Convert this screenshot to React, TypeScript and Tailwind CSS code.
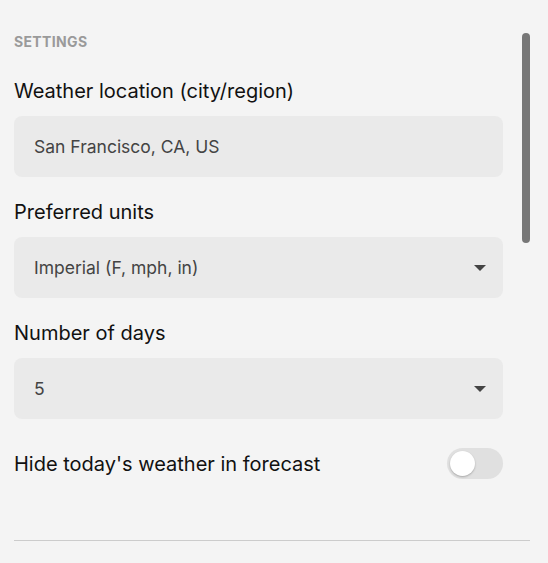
import { useState } from "react";

function Caret() {
  return (
    <svg width="14" height="8" viewBox="0 0 14 8" className="shrink-0">
      <path d="M1 1h12L7 7z" fill="#444" />
    </svg>
  );
}

function Field({ label, children }: { label: string; children: React.ReactNode }) {
  return (
    <div className="mb-[23px]">
      <div className="h-6 leading-[25px] text-[20px] text-[#111] mb-[13px]">{label}</div>
      {children}
    </div>
  );
}

function SelectBox({ value }: { value: string }) {
  return (
    <div className="h-[61px] rounded-lg bg-[#eaeaea] flex items-center justify-between pl-5 pr-4">
      <span className="text-[17.5px] leading-6 pt-px text-[#444]">{value}</span>
      <Caret />
    </div>
  );
}

export default function App() {
  const [hideToday, setHideToday] = useState(false);

  return (
    <div
      className="relative w-[548px] h-[563px] bg-[#f4f4f4] overflow-hidden"
      style={{ fontFamily: "Inter, 'Noto Sans', sans-serif" }}
    >
      {/* scrollbar thumb */}
      <div className="absolute left-[522px] top-[33px] w-2 h-[210px] rounded-full bg-[#777]" />

      <div className="pl-[14px] pr-[18px] pt-[34px]">
        <div className="w-[489px]">
          <div className="h-4 leading-4 text-[14px] font-bold tracking-wide text-[#9a9a9a] mb-[29px]">
            SETTINGS
          </div>

          <Field label="Weather location (city/region)">
            <div className="h-[61px] rounded-lg bg-[#eaeaea] flex items-center pl-5">
              <span className="text-[17.5px] leading-6 pt-px text-[#444]">San Francisco, CA, US</span>
            </div>
          </Field>

          <Field label="Preferred units">
            <SelectBox value="Imperial (F, mph, in)" />
          </Field>

          <Field label="Number of days">
            <SelectBox value="5" />
          </Field>

          <div className="flex items-center justify-between mt-[29px] h-[31px]">
            <span className="text-[20px] leading-6 pt-px text-[#111]">Hide today's weather in forecast</span>
            <button
              onClick={() => setHideToday(!hideToday)}
              className={`w-14 h-[31px] rounded-full p-[3px] flex ${
                hideToday ? "bg-[#4a90e2] justify-end" : "bg-[#e0e0e0] justify-start"
              }`}
            >
              <span className="w-[25px] h-[25px] rounded-full bg-white shadow-[0_1px_2px_rgba(0,0,0,0.25)]" />
            </button>
          </div>
        </div>

        <div className="mt-[61px] w-[516px] border-t border-[#cccccc]" />
      </div>
    </div>
  );
}
